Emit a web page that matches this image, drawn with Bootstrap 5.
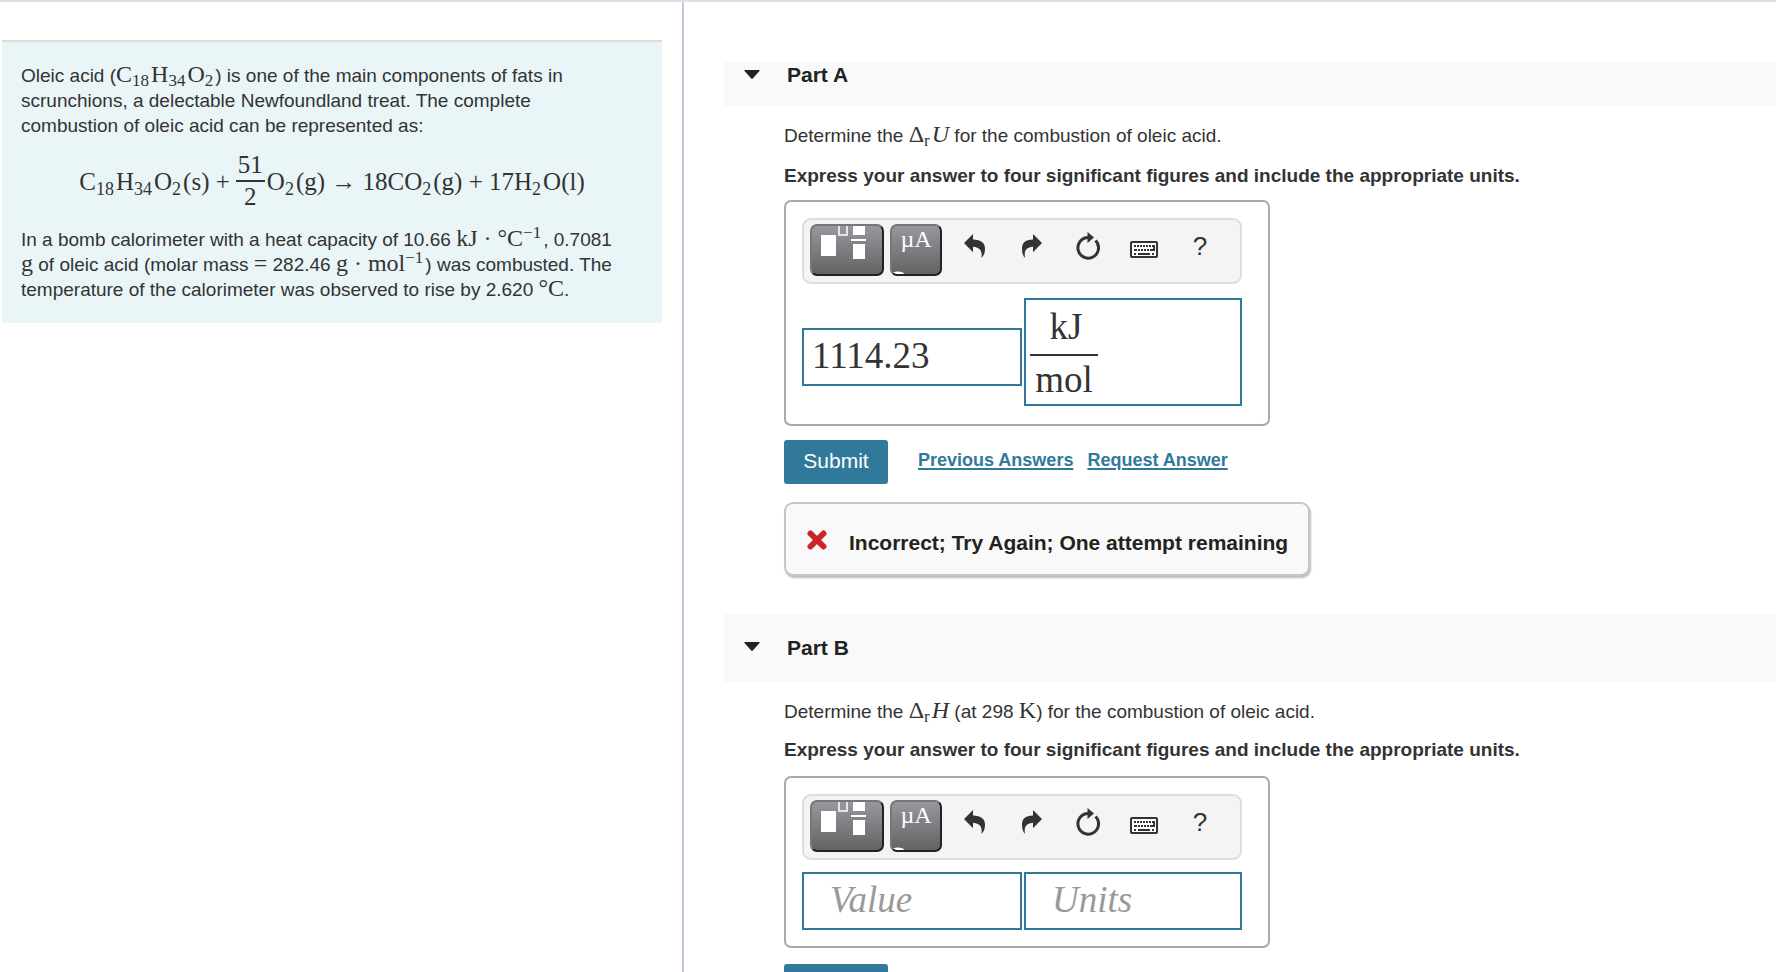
<!DOCTYPE html>
<html lang="en">
<head>
<meta charset="utf-8">
<meta name="viewport" content="width=device-width, initial-scale=1">
<title>Oleic acid combustion</title>
<link rel="stylesheet" href="https://cdn.jsdelivr.net/npm/bootstrap@5.3.0/dist/css/bootstrap.min.css">
<style>
  body { font-family: "Liberation Sans", Arial, sans-serif; font-size: 19px; line-height: 25px; color: #333; background: #fff; }
  .workspace { border-top: 2px solid #e0e0e0; display: grid; grid-template-columns: minmax(300px, 684px) minmax(0, 1fr); }
  .intro-pane { border-right: 2px solid #bccbdc; padding: 38px 20px 0 2px; }
  .intro-box { background: #eaf5f8; border-top: 2px solid #ddd; padding: 21px 19px; }
  .tex { font-family: "Liberation Serif", "Times New Roman", serif; font-size: 24px; line-height: 0; white-space: nowrap; }
  .tex sub, .tex sup { font-size: 17px; line-height: 0; margin-right: 2px; }
  .equation { font-size: 25px; line-height: 34px; margin: 12px 0 13px; }
  .equation sub { font-size: 18px; }
  .eq-frac { line-height: 30px; padding-bottom: 2px; margin: 0 2px 0 6px; }
  .eq-frac span:first-child { border-bottom: 2px solid #333; padding: 0 2px; }
  .part-head { background: #f9f9f9; margin-left: 40px; padding-left: 20px; color: #222; }
  .part-head h2 { font-size: 21px; line-height: 26px; font-weight: 700; margin: 0; }
  .part-a { margin-top: 60px; height: 44px; }
  .part-b { margin-top: 38px; height: 68px; }
  .toggle { width: 16px; border: 0; background: none; padding: 0; margin-right: 27px; line-height: 0; color: #222; }
  .part-b .toggle { padding-bottom: 4px; }
  .part-body { margin-left: 100px; padding-right: 20px; }
  .stem { margin: 0 0 15px; padding-top: 17px; }
  .part-b + .part-body .stem { margin-bottom: 13px; }
  .instr { font-weight: 700; margin: 0 0 12px; }
  .part-b + .part-body .instr { margin-bottom: 14px; }
  .answer { width: 486px; max-width: 100%; border: 2px solid #a9a9a9; border-radius: 7px; padding: 16px 26px 16px 16px; }
  .tools { height: 66px; border: 2px solid #ddd; border-radius: 9px; background: #f4f4f4; padding: 4px 6px; }
  .key { height: 52px; border: 2px solid #777; border-right-color: #222; border-bottom-color: #222; border-radius: 7px; background: linear-gradient(#9896a0, #636363); color: #fff; padding: 0; overflow: hidden; }
  .key-template { width: 74px; }
  .key-units { width: 52px; margin: 0 6px; position: relative; font: 24px/24px "Liberation Serif", serif; padding-bottom: 22px; }
  .key svg { display: block; }
  .key-units svg { position: absolute; left: 0; bottom: 0; }
  .tool { width: 56px; height: 52px; border: 0; background: none; padding: 0; color: #333; font-size: 26px; line-height: 30px; }
  .tool svg { display: block; }
  .help { padding: 0 0 8px; }
  .fields { display: grid; grid-template-columns: 220fr 218fr; align-items: center; gap: 2px; margin-top: 12px; }
  .fields-tall { margin: 14px 0 2px; }
  .field { border: 2px solid #31799b; border-radius: 0; background: #fff; color: #333; font: 37px/40px "Liberation Serif", "Times New Roman", serif; min-width: 0; }
  input.field { width: 100%; height: 58px; padding: 0 8px 4px; }
  .fields-tall .value { margin-top: 10px; }
  input.blank { padding: 0 26px 4px; font-style: italic; }
  .field::placeholder { color: #999; opacity: 1; }
  .units-frac { height: 108px; padding: 4px; }
  .units-frac input { display: block; width: 68px; border: 0; padding: 0; text-align: center; font: inherit; color: inherit; background: none; }
  .units-frac input:first-child { border-bottom: 2px solid #333; height: 52px; padding: 0 0 6px 4px; }
  .units-frac input:last-child { padding-top: 4px; }
  .submit-row { margin: 14px 0 18px; }
  .submit { width: 104px; height: 44px; background: #31799b; color: #fff; border: 0; border-radius: 3px; font-size: 21px; line-height: 24px; padding: 8px 0 10px; }
  .answer-link { color: #31799b; font-weight: 700; font-size: 18px; padding-bottom: 4px; text-decoration-thickness: 2px; text-underline-offset: 2px; }
  .prev { margin: 0 14px 0 30px; }
  .feedback { width: fit-content; max-width: 100%; background: #f9f9f9; border: 2px solid #c6c6c6; border-radius: 9px; box-shadow: 1px 2px 2px #bbb; min-height: 74px; padding: 6px 20px 0; font-size: 21px; font-weight: 700; color: #222; }
  .cross { margin: 0 21px 4px 0; }
</style>
</head>
<body>
<div class="workspace vh-100 overflow-hidden">
  <aside class="intro-pane">
    <div class="intro-box">
      <p class="mb-0 me-4">Oleic acid (<span class="tex">C<sub>18</sub>H<sub>34</sub>O<sub>2</sub></span>) is one of the main components of fats in scrunchions, a delectable Newfoundland treat. The complete combustion of oleic acid can be represented as:</p>
      <div class="tex equation d-flex justify-content-center align-items-center">
        <span>C<sub>18</sub>H<sub>34</sub>O<sub>2</sub>(s) +</span>
        <span class="eq-frac d-flex flex-column text-center"><span>51</span><span>2</span></span>
        <span>O<sub>2</sub>(g) → 18CO<sub>2</sub>(g) + 17H<sub>2</sub>O(l)</span>
      </div>
      <p class="mb-0 me-4">In a bomb calorimeter with a heat capacity of 10.66 <span class="tex">kJ · °C<sup>−1</sup></span>, 0.7081 <span class="tex">g</span> of oleic acid (molar mass <span class="tex">=</span> 282.46 <span class="tex">g · mol<sup>−1</sup></span>) was combusted. The temperature of the calorimeter was observed to rise by 2.620 <span class="tex">°C</span>.</p>
    </div>
  </aside>

  <main>
    <section>
      <div class="part-head part-a d-flex align-items-start">
        <button class="toggle pt-2" type="button" aria-label="Collapse Part A"><svg width="16" height="9" viewBox="0 0 16 9" fill="currentColor"><path d="M1 0h14q1 0 .5 1L9 8.300q-1 1-2 0L.5 1Q0 0 1 0z"/></svg></button>
        <h2>Part A</h2>
      </div>
      <div class="part-body">
        <p class="stem">Determine the <span class="tex">Δ<sub>r</sub><i>U</i></span> for the combustion of oleic acid.</p>
        <p class="instr">Express your answer to four significant figures and include the appropriate units.</p>
        <div class="answer">
          <div class="tools d-flex" role="toolbar" aria-label="Math tools">
            <button class="key key-template" type="button" aria-label="Templates"><svg width="70" height="48" viewBox="2 2 70 48"><g fill="#fff"><path d="M11 11h15v21H11zM43 0h12v11H43zM41 15h15v2H41zM43 20h12v15H43z"/><path d="M29 0v11h8V0" fill="none" stroke="#fff" stroke-width="1.500"/></g></svg></button>
            <button class="key key-units" type="button" aria-label="Units">µA<svg width="14" height="20" viewBox="0 0 14 20"><ellipse cx="6" cy="20" rx="6" ry="2.500" fill="#fff"/></svg></button>
            <button class="tool" type="button" aria-label="Undo"><svg width="56" height="52"><path fill="#333" d="M16 19l9-9v5.500C33 15.500 37 19 37 25c0 4-1.500 7-3.500 9 .800-6.500-.500-10.500-8.500-11.300v5.600z"/></svg></button>
            <button class="tool" type="button" aria-label="Redo"><svg width="56" height="52"><path fill="#333" d="M38 19l-9-9v5.500C21 15.500 18 19 18 25c0 4 1 7 3 9-.800-6.500 0-10.500 8-11.300v5.600z"/></svg></button>
            <button class="tool" type="button" aria-label="Reset"><svg width="56" height="52"><path fill="none" stroke="#333" stroke-width="3" d="M35.500 16.500A10.300 10.300 0 1 1 28 13.500"/><path fill="#333" d="M27.500 8l6.500 5.500L27.500 19z"/></svg></button>
            <button class="tool" type="button" aria-label="Keyboard"><svg width="56" height="52"><rect x="15" y="18" width="26" height="15" rx="1" fill="#fff" stroke="#333" stroke-width="2"/><path stroke="#333" stroke-width="2" fill="none" d="M18 22h2m1 0h2m1 0h2m1 0h2m1 0h2m1 0h2m1 0h2M18 26h3m1 0h2m1 0h2m1 0h2m1 0h2m1 0h4v-5M18 30h2m2 0h12m2 0h2"/></svg></button>
            <button class="tool help" type="button" aria-label="Help">?</button>
          </div>
          <div class="fields fields-tall">
            <input class="field value" type="text" aria-label="Value" value="1114.23">
            <div class="field units-frac" role="group" aria-label="Units"><input type="text" aria-label="Numerator" value="kJ"><input type="text" aria-label="Denominator" value="mol"></div>
          </div>
        </div>
        <div class="d-flex align-items-center submit-row">
          <button class="submit" type="submit">Submit</button>
          <a class="answer-link prev" href="#">Previous Answers</a>
          <a class="answer-link" href="#">Request Answer</a>
        </div>
        <div class="feedback d-flex align-items-center" role="status">
          <svg class="flex-shrink-0 cross" width="22" height="22" viewBox="0 0 22 22"><path d="M4.500 4.500l13 13m0-13l-13 13" stroke="#c9252b" stroke-width="6" stroke-linecap="round"/></svg>
          <span>Incorrect; Try Again; One attempt remaining</span>
        </div>
      </div>
    </section>

    <section>
      <div class="part-head part-b d-flex align-items-center">
        <button class="toggle" type="button" aria-label="Collapse Part B"><svg width="16" height="9" viewBox="0 0 16 9" fill="currentColor"><path d="M1 0h14q1 0 .5 1L9 8.300q-1 1-2 0L.5 1Q0 0 1 0z"/></svg></button>
        <h2>Part B</h2>
      </div>
      <div class="part-body">
        <p class="stem">Determine the <span class="tex">Δ<sub>r</sub><i>H</i></span> (at 298 <span class="tex">K</span>) for the combustion of oleic acid.</p>
        <p class="instr">Express your answer to four significant figures and include the appropriate units.</p>
        <div class="answer">
          <div class="tools d-flex" role="toolbar" aria-label="Math tools">
            <button class="key key-template" type="button" aria-label="Templates"><svg width="70" height="48" viewBox="2 2 70 48"><g fill="#fff"><path d="M11 11h15v21H11zM43 0h12v11H43zM41 15h15v2H41zM43 20h12v15H43z"/><path d="M29 0v11h8V0" fill="none" stroke="#fff" stroke-width="1.500"/></g></svg></button>
            <button class="key key-units" type="button" aria-label="Units">µA<svg width="14" height="20" viewBox="0 0 14 20"><ellipse cx="6" cy="20" rx="6" ry="2.500" fill="#fff"/></svg></button>
            <button class="tool" type="button" aria-label="Undo"><svg width="56" height="52"><path fill="#333" d="M16 19l9-9v5.500C33 15.500 37 19 37 25c0 4-1.500 7-3.500 9 .800-6.500-.500-10.500-8.500-11.300v5.600z"/></svg></button>
            <button class="tool" type="button" aria-label="Redo"><svg width="56" height="52"><path fill="#333" d="M38 19l-9-9v5.500C21 15.500 18 19 18 25c0 4 1 7 3 9-.800-6.500 0-10.500 8-11.300v5.600z"/></svg></button>
            <button class="tool" type="button" aria-label="Reset"><svg width="56" height="52"><path fill="none" stroke="#333" stroke-width="3" d="M35.500 16.500A10.300 10.300 0 1 1 28 13.500"/><path fill="#333" d="M27.500 8l6.500 5.500L27.500 19z"/></svg></button>
            <button class="tool" type="button" aria-label="Keyboard"><svg width="56" height="52"><rect x="15" y="18" width="26" height="15" rx="1" fill="#fff" stroke="#333" stroke-width="2"/><path stroke="#333" stroke-width="2" fill="none" d="M18 22h2m1 0h2m1 0h2m1 0h2m1 0h2m1 0h2m1 0h2M18 26h3m1 0h2m1 0h2m1 0h2m1 0h2m1 0h4v-5M18 30h2m2 0h12m2 0h2"/></svg></button>
            <button class="tool help" type="button" aria-label="Help">?</button>
          </div>
          <div class="fields">
            <input class="field value blank" type="text" aria-label="Value" placeholder="Value">
            <input class="field blank" type="text" aria-label="Units" placeholder="Units">
          </div>
        </div>
        <button class="submit mt-3" type="submit">Submit</button>
      </div>
    </section>
  </main>
</div>
<script src="https://cdn.jsdelivr.net/npm/bootstrap@5.3.0/dist/js/bootstrap.bundle.min.js"></script>
</body>
</html>
